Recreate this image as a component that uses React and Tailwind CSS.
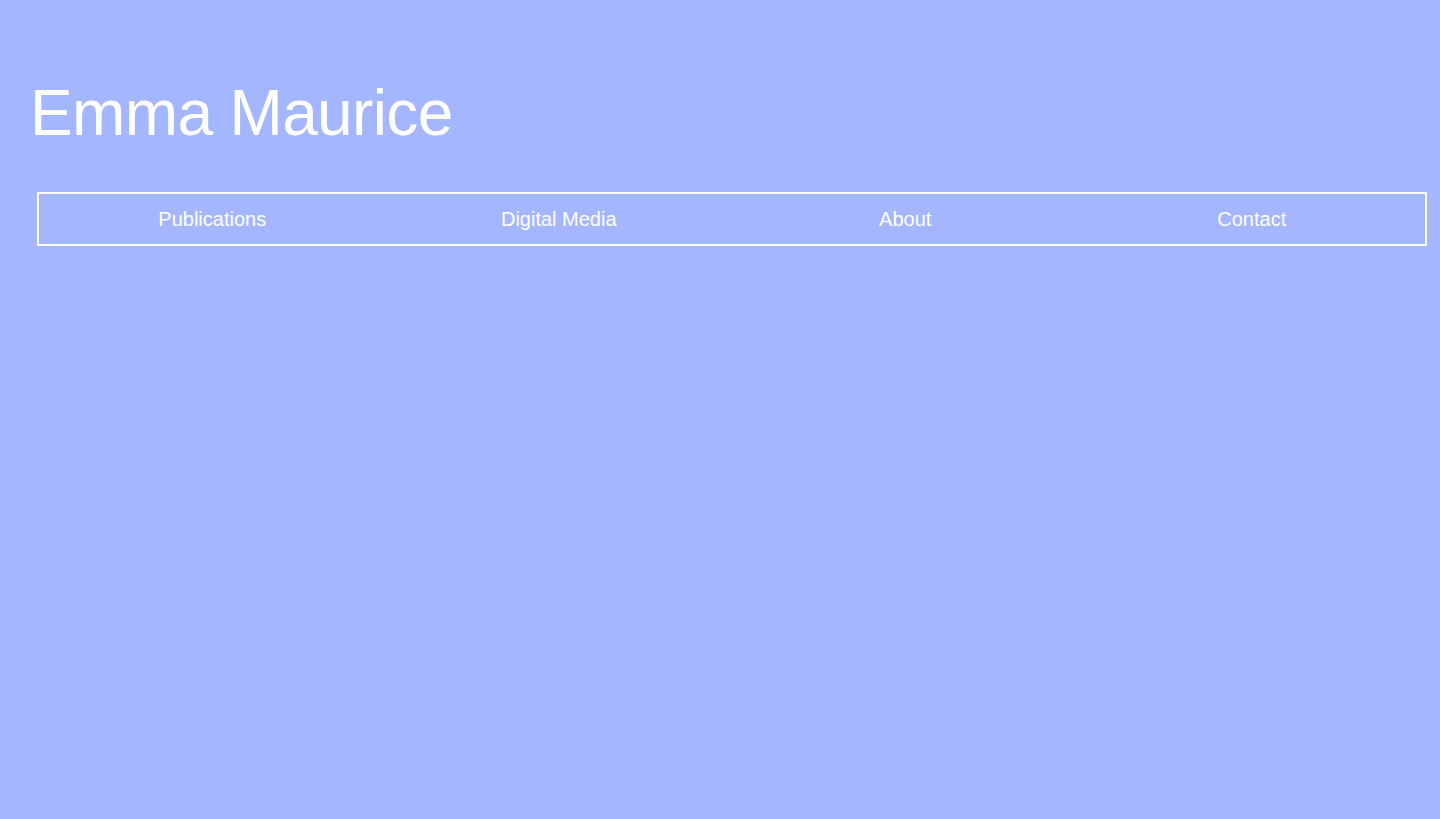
export default function App() {
  const items = ["Publications", "Digital Media", "About", "Contact"];
  return (
    <div
      className="min-h-screen w-full bg-[#a4b6fe] text-white"
      style={{ fontFamily: '"Liberation Sans", Arial, sans-serif' }}
    >
      <header className="pl-[30px] pt-[81px]">
        <h1 className="text-[64px] leading-[64px] font-normal tracking-[-0.01em]">
          Emma Maurice
        </h1>
      </header>
      <nav className="ml-[37px] mr-[13px] mt-[47px] grid h-[54px] grid-cols-4 border-2 border-white">
        {items.map((t) => (
          <a
            key={t}
            href="#"
            className="flex items-center justify-center text-[20px] leading-[20px] text-white"
          >
            {t}
          </a>
        ))}
      </nav>
    </div>
  );
}
